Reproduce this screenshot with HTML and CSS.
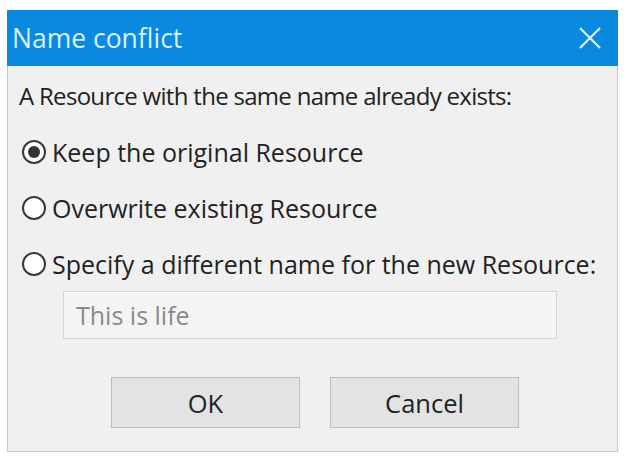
FILE: index.html
```html
<!DOCTYPE html>
<html lang="en">
<head>
    <meta charset="UTF-8">
    <meta name="viewport" content="width=device-width, initial-scale=1.0">
    <title>Name conflict</title>
    <link rel="stylesheet" href="styles.css">
</head>
<body>
    <div class="dialog">
        <div class="titlebar">
            <span class="title">Name conflict</span>
            <svg class="close" width="24" height="24" viewBox="0 0 24 24">
                <path d="M2 2 L22 22 M22 2 L2 22" stroke="#dff2ff" stroke-width="2.2" fill="none"/>
            </svg>
        </div>

        <div class="content">
            <p class="prompt">A Resource with the same name already exists:</p>

            <label class="option">
                <span class="radio checked"></span>
                Keep the original Resource
            </label>
            <label class="option">
                <span class="radio"></span>
                Overwrite existing Resource
            </label>
            <label class="option">
                <span class="radio"></span>
                Specify a different name for the new Resource:
            </label>

            <div class="name-input">This is life</div>

            <div class="buttons">
                <button class="btn">OK</button>
                <button class="btn">Cancel</button>
            </div>
        </div>
    </div>
</body>
</html>
```

FILE: styles.css
```css
body {
    margin: 0;
    padding: 10px 0 0 7px;
    background: #ffffff;
    font-family: 'Open Sans', 'Noto Sans', sans-serif;
}
.dialog {
    width: 611px;
    height: 442px;
    background: #f0f0f0;
    border: 1px solid #c8c8c8;
    border-top: none;
    box-sizing: border-box;
    display: flex;
    flex-direction: column;
}
.titlebar {
    height: 56px;
    background: #0a89e0;
    display: flex;
    align-items: center;
    justify-content: space-between;
    padding: 0 16px 0 5px;
    margin: 0 -1px;
}
.title {
    color: #d8f0ff;
    font-size: 26.5px;
}
.content {
    padding: 14px 0 0 11px;
    color: #222222;
    font-size: 25px;
}
.prompt {
    margin: 0 0 24px;
    height: 32px;
    line-height: 32px;
    font-size: 24px;
    letter-spacing: -0.7px;
}
.option {
    display: flex;
    align-items: center;
    gap: 6px;
    height: 32px;
    margin-bottom: 24px;
    margin-left: 3px;
}
.option:last-of-type {
    margin-bottom: 0;
}
.radio {
    width: 24px;
    height: 24px;
    border: 2px solid #3a3a3a;
    border-radius: 50%;
    background: #ffffff;
    box-sizing: border-box;
    display: flex;
    align-items: center;
    justify-content: center;
    flex-shrink: 0;
}
.radio.checked::after {
    content: "";
    width: 12px;
    height: 12px;
    border-radius: 50%;
    background: #333333;
}
.name-input {
    width: 494px;
    height: 48px;
    margin: 11px 0 0 44px;
    box-sizing: border-box;
    border: 1px solid #d4d4d4;
    background: #f4f4f4;
    color: #8a8a8a;
    padding: 0 12px;
    line-height: 46px;
}
.buttons {
    display: flex;
    gap: 30px;
    margin: 38px 0 0 92px;
}
.btn {
    width: 189px;
    height: 51px;
    border: 1px solid #bdbdbd;
    background: #e3e3e3;
    color: #222222;
    font-family: inherit;
    font-size: 25.5px;
    padding: 0;
}
```
